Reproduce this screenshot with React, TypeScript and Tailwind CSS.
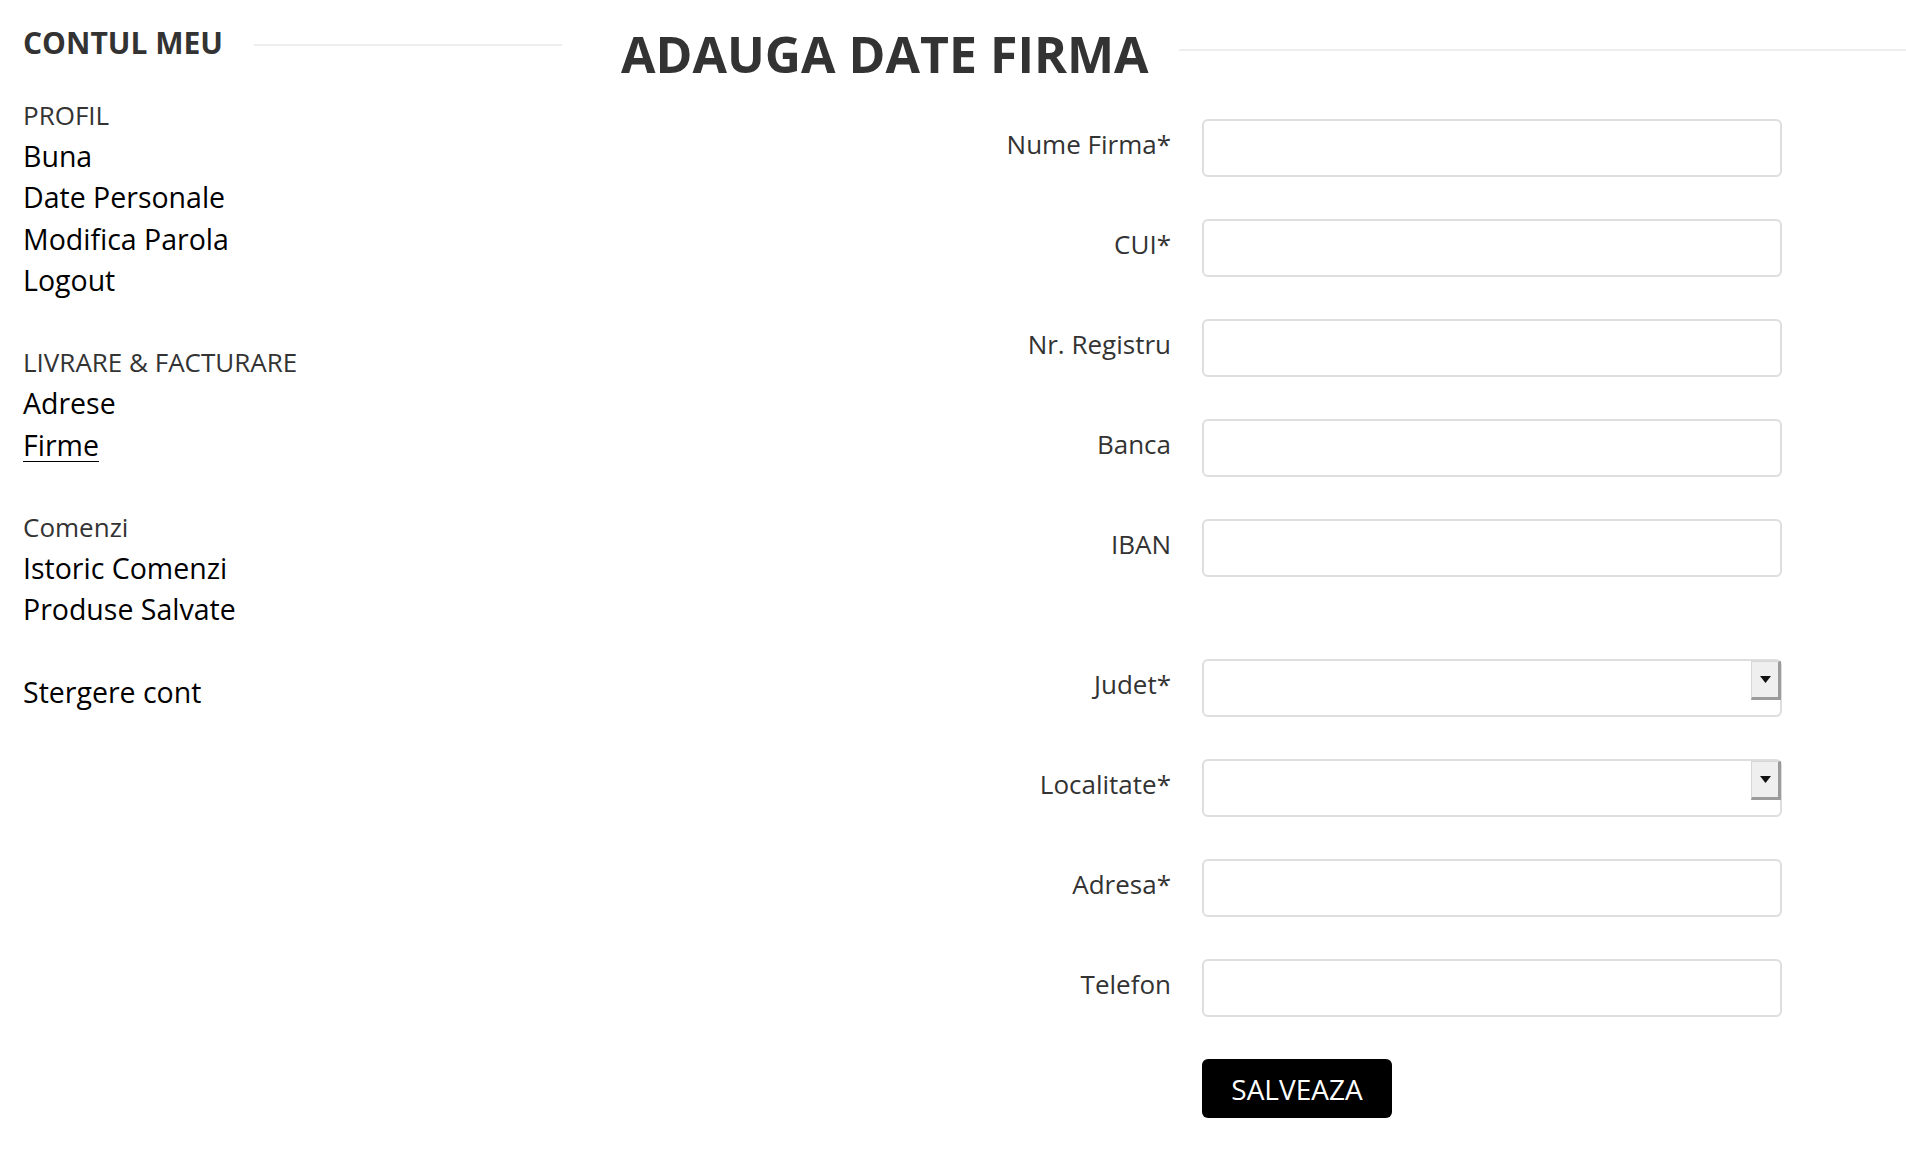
import React from 'react';

type Field = { label: string; select?: boolean; spaceAfter?: boolean };

const fields: Field[] = [
  { label: 'Nume Firma*' },
  { label: 'CUI*' },
  { label: 'Nr. Registru' },
  { label: 'Banca' },
  { label: 'IBAN', spaceAfter: true },
  { label: 'Judet*', select: true },
  { label: 'Localitate*', select: true },
  { label: 'Adresa*' },
  { label: 'Telefon' },
];

const SelectArrow = () => (
  <div className="pointer-events-none absolute right-[1px] top-[2px] flex h-[39px] w-[30px] items-center justify-center border-t border-l border-r-[3px] border-b-[3px] border-t-[#d6d6d6] border-l-[#d6d6d6] border-r-[#9b9b9b] border-b-[#9b9b9b] bg-[#efefef]">
    <svg width="11" height="7" viewBox="0 0 11 7">
      <polygon points="0,0 11,0 5.5,7" fill="#111" />
    </svg>
  </div>
);

const Sidebar = () => {
  const heading = 'text-[26px] text-[#333]';
  const link = 'text-[28.5px] text-black';
  return (
    <aside className="w-[562px] shrink-0 pl-[23px] pt-7">
      <div className="flex items-center">
        <h2 className="text-[30px] font-bold leading-[30px] text-[#333]">CONTUL MEU</h2>
        <div className="ml-[31px] mt-[3px] h-[2px] flex-1 bg-[#eeeeee]" />
      </div>

      <ul className="mt-[37px] leading-[41.2px]">
        <li className={heading}>PROFIL</li>
        <li className={link}>Buna</li>
        <li className={link}>Date Personale</li>
        <li className={link}>Modifica Parola</li>
        <li className={link}>Logout</li>
        <li className="h-[41.2px]" />
        <li className={heading}>LIVRARE &amp; FACTURARE</li>
        <li className={link}>Adrese</li>
        <li className={`${link} underline decoration-1 underline-offset-[5px]`}>Firme</li>
        <li className="h-[41.2px]" />
        <li className={heading}>Comenzi</li>
        <li className={link}>Istoric Comenzi</li>
        <li className={link}>Produse Salvate</li>
        <li className="h-[41.2px]" />
        <li className={link}>Stergere cont</li>
      </ul>
    </aside>
  );
};

export default function App() {
  return (
    <div className="flex min-h-[1174px] bg-white font-['Open_Sans',sans-serif]">
      <Sidebar />

      <main className="flex-1 pl-[59px] pt-7">
        <div className="flex items-center">
          <h1 className="text-[50px] font-bold leading-[52px] text-[#333]">ADAUGA DATE FIRMA</h1>
          <div className="mb-[8px] ml-[30px] h-[2px] flex-1 bg-[#eeeeee]" />
        </div>

        <form className="mt-[39px] flex flex-col">
          {fields.map((f) => (
            <div
              key={f.label}
              className={`flex items-start gap-[31px] ${f.spaceAfter ? 'mb-[82px]' : 'mb-[42px]'}`}
            >
              <label className="mt-[7px] w-[550px] text-right text-[26px] leading-9 text-[#333]">
                {f.label}
              </label>
              {f.select ? (
                <div className="relative">
                  <select className="h-[58px] w-[580px] appearance-none rounded-md border-2 border-[#dedede] bg-white px-3 text-[22px] outline-none" />
                  <SelectArrow />
                </div>
              ) : (
                <input
                  type="text"
                  className="h-[58px] w-[580px] rounded-md border-2 border-[#dedede] bg-white px-3 text-[22px] outline-none"
                />
              )}
            </div>
          ))}

          <div className="flex">
            <div className="w-[581px]" />
            <button
              type="button"
              className="h-[59px] w-[190px] rounded-[6px] bg-black text-[28px] leading-none text-white"
            >
              SALVEAZA
            </button>
          </div>
        </form>
      </main>
    </div>
  );
}
